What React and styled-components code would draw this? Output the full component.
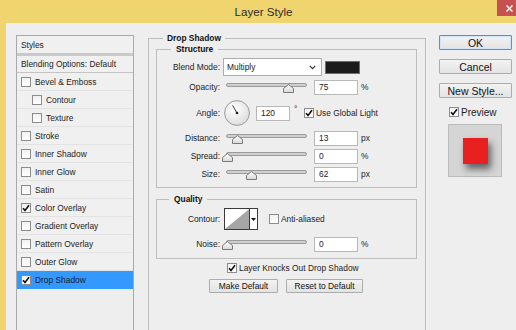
import React from "react";
import styled, { createGlobalStyle } from "styled-components";

const FONT = `"Liberation Sans", Arial, sans-serif`;
const SMALL = "8.4px";

const Global = createGlobalStyle`
  html, body { margin: 0; padding: 0; background: #eeeeee; }
  body { font-family: ${FONT}; color: #1c1c1c; }
  * { box-sizing: border-box; }
`;

const Window = styled.div`
  width: 516px;
  height: 330px;
  overflow: hidden;
  background: #f0d46e;
  display: flex;
  flex-direction: column;
`;

const TitleBar = styled.div`
  height: 23px;
  flex-shrink: 0;
  display: flex;
  align-items: flex-start;
`;

const Title = styled.div`
  flex: 1;
  padding-left: 30px;
  text-align: center;
  line-height: 24px;
  font-size: 11.6px;
  color: #2c2c2c;
`;

const CloseButton = styled.div`
  width: 19px;
  height: 16px;
  background: #c75050;
  display: flex;
  align-items: center;
  justify-content: center;
  padding-left: 5px;
`;

const Frame = styled.div`
  flex: 1;
  padding-left: 6px;
  display: flex;
  min-height: 0;
`;

const Content = styled.div`
  flex: 1;
  height: 330px;
  background: #eeeeee;
  display: flex;
  align-items: flex-start;
`;

/* ---------- Styles list ---------- */
const StylesPanel = styled.div`
  margin: 12px 0 0 10px;
  width: 118px;
  height: 330px;
  flex-shrink: 0;
  border: 1px solid #a9a9a9;
  background: #eeeeee;
  display: flex;
  flex-direction: column;
  font-size: ${SMALL};
`;

const PanelHeader = styled.div`
  height: 20px;
  padding-left: 4px;
  display: flex;
  align-items: center;
  background: #f0f0f0;
  border-bottom: 3px solid #c9c9c9;
`;

const BlendRow = styled.div`
  height: 17px;
  padding-left: 4px;
  display: flex;
  align-items: center;
  background: #f0f0f0;
  border-bottom: 1px solid #c4c4c4;
`;

const ListRow = styled.div`
  height: 18px;
  display: flex;
  align-items: center;
  gap: 4px;
  padding-left: ${(p) => (p.$indent ? 15 : 4)}px;
  background: ${(p) => (p.$selected ? "#3399ff" : "#f0f0f0")};
  border-bottom: 1px solid ${(p) => (p.$selected ? "#3399ff" : "#e3e3e3")};
`;

/* ---------- Checkbox ---------- */
const Box = styled.span`
  width: 10px;
  height: 10px;
  flex-shrink: 0;
  border: 1px solid #8c8c8c;
  background: linear-gradient(#f1f1f1, #ffffff);
  display: inline-flex;
  align-items: center;
  justify-content: center;
`;

const Check = ({ checked }) => (
  <Box>
    {checked && (
      <svg width="8" height="8" viewBox="0 0 8 8">
        <path d="M1 4.2 L3 6.4 L7 1.2" fill="none" stroke="#111" strokeWidth="1.6" />
      </svg>
    )}
  </Box>
);

/* ---------- Group boxes ---------- */
const MainGroup = styled.fieldset`
  margin: 10px 0 0 14px;
  width: 278px;
  height: 330px;
  flex-shrink: 0;
  min-width: 0;
  border: 1px solid #bdbdbd;
  padding: 1px 8px 0 7px;
  font-size: ${SMALL};
`;

const SubGroup = styled.fieldset`
  margin: ${(p) => p.$mt || 0}px 0 0 0;
  width: 261px;
  min-width: 0;
  border: 1px solid #bdbdbd;
  padding: 0 0 ${(p) => p.$pb || 0}px 0;
`;

const Legend = styled.legend`
  font-weight: bold;
  font-size: ${SMALL};
  line-height: 10px;
  padding: 0 ${(p) => p.$pad || 5}px;
  margin-left: ${(p) => p.$ml}px;
  color: #111;
`;

const Rows = styled.div`
  margin-top: 4px;
  display: flex;
  flex-direction: column;
  gap: ${(p) => p.$gap || 2}px;
`;

const Row = styled.div`
  height: ${(p) => p.$h}px;
  display: flex;
  align-items: center;
`;

const Label = styled.span`
  width: 63px;
  text-align: right;
  flex-shrink: 0;
  color: #222;
`;

const Select = styled.div`
  margin-left: 3px;
  width: 99px;
  height: 18px;
  background: #fff;
  border: 1px solid #adadad;
  display: flex;
  align-items: center;
  justify-content: space-between;
  padding: 0 5px 0 3px;
`;

const Swatch = styled.div`
  margin-left: 3px;
  width: 35px;
  height: 13px;
  background: #1b1b1b;
  border: 1px solid #6d6d6d;
`;

const SliderWrap = styled.div`
  position: relative;
  margin-left: 6px;
  width: 81px;
  height: 12px;
  flex-shrink: 0;
`;

const Track = styled.div`
  margin-top: 2px;
  height: 4px;
  border-radius: 2px;
  border: 1px solid #9b9b9b;
  background: #cfcfcf;
`;

const Thumb = styled.svg`
  position: absolute;
  top: 3px;
  margin-left: -5px;
`;

const Slider = ({ frac }) => (
  <SliderWrap>
    <Track />
    <Thumb width="11" height="9" viewBox="0 0 11 9" style={{ left: `${frac * 100}%` }}>
      <defs>
        <linearGradient id="tg" x1="0" y1="0" x2="0" y2="1">
          <stop offset="0" stopColor="#ffffff" />
          <stop offset="1" stopColor="#d8d8d8" />
        </linearGradient>
      </defs>
      <path d="M5.5 0.5 L10.5 4.5 L10.5 8.5 L0.5 8.5 L0.5 4.5 Z" fill="url(#tg)" stroke="#7a7a7a" />
    </Thumb>
  </SliderWrap>
);

const Field = styled.div`
  margin-left: ${(p) => p.$ml || 7}px;
  width: ${(p) => p.$w || 44}px;
  height: 15px;
  flex-shrink: 0;
  background: #fff;
  border: 1px solid #b8b8b8;
  padding-left: 4px;
  display: flex;
  align-items: center;
  color: #222;
`;

const Unit = styled.span`
  margin-left: 3px;
`;

const DegUnit = styled.span`
  margin-left: 4px;
  width: 10px;
  align-self: flex-start;
  margin-top: 6px;
`;

const Dial = styled.svg`
  margin-left: 4px;
  flex-shrink: 0;
`;

const CheckText = styled.span`
  margin-left: 2px;
  color: #1c1c1c;
`;

const ContourBox = styled.div`
  margin-left: 4px;
  width: 34px;
  height: 22px;
  display: flex;
  border: 1px solid #3a3a3a;
  background: #fff;
`;

const ContourArrow = styled.div`
  width: 8px;
  border-left: 1px solid #3a3a3a;
  display: flex;
  align-items: center;
  justify-content: center;
`;

const Spacer = styled.span`
  margin-left: ${(p) => p.$w}px;
  display: inline-flex;
`;

const KnockRow = styled.div`
  margin-top: 4px;
  height: 10px;
  padding-left: 71px;
  display: flex;
  align-items: center;
`;

const ButtonRow = styled.div`
  margin-top: 6px;
  padding-left: 53px;
  display: flex;
  gap: 8px;
`;

const Button = styled.div`
  width: ${(p) => p.$w}px;
  height: ${(p) => p.$h || 14}px;
  display: flex;
  align-items: center;
  justify-content: center;
  font-size: ${(p) => p.$fs || SMALL};
  color: #111;
  background: linear-gradient(#f3f3f3, #e3e3e3);
  border: 1px solid ${(p) => (p.$primary ? "#4f94d6" : "#acacac")};
  box-shadow: ${(p) => (p.$primary ? "inset 0 0 0 1px #cfe4f8" : "none")};
  border-radius: 1px;
`;

/* ---------- Right column ---------- */
const Side = styled.div`
  margin: 12px 0 0 13px;
  width: 73px;
  flex-shrink: 0;
  display: flex;
  flex-direction: column;
  gap: 9px;
`;

const PreviewRow = styled.div`
  height: 10px;
  padding-left: 10px;
  display: flex;
  align-items: center;
  font-size: 10px;
  gap: 2px;
`;

const PreviewBox = styled.div`
  margin: -2px 0 0 9px;
  width: 54px;
  height: 53px;
  background: #d5d5d5;
  border: 1px solid #bcbcbc;
  display: flex;
  align-items: center;
  justify-content: center;
`;

const RedSquare = styled.div`
  width: 25px;
  height: 26px;
  background: #e8201f;
  box-shadow: 3px 5px 7px rgba(0, 0, 0, 0.55);
`;

const styleItems = [
  { name: "Bevel & Emboss" },
  { name: "Contour", indent: true },
  { name: "Texture", indent: true },
  { name: "Stroke" },
  { name: "Inner Shadow" },
  { name: "Inner Glow" },
  { name: "Satin" },
  { name: "Color Overlay", checked: true },
  { name: "Gradient Overlay" },
  { name: "Pattern Overlay" },
  { name: "Outer Glow" },
  { name: "Drop Shadow", checked: true, selected: true },
];

const Chevron = () => (
  <svg width="7" height="5" viewBox="0 0 7 5">
    <path d="M0.8 0.8 L3.5 3.6 L6.2 0.8" fill="none" stroke="#333" strokeWidth="1.2" />
  </svg>
);

const SliderRow = ({ label, value, unit, frac }) => (
  <Row $h={16}>
    <Label>{label}</Label>
    <Slider frac={frac} />
    <Field>{value}</Field>
    <Unit>{unit}</Unit>
  </Row>
);

export default function App() {
  return (
    <>
      <Global />
      <Window>
        <TitleBar>
          <Title>Layer Style</Title>
          <CloseButton>
            <svg width="7" height="7" viewBox="0 0 7 7">
              <path d="M0.5 0.5 L6.5 6.5 M6.5 0.5 L0.5 6.5" stroke="#fff" strokeWidth="1.5" />
            </svg>
          </CloseButton>
        </TitleBar>
        <Frame>
          <Content>
            <StylesPanel>
              <PanelHeader>Styles</PanelHeader>
              <BlendRow>Blending Options: Default</BlendRow>
              {styleItems.map((it) => (
                <ListRow key={it.name} $indent={it.indent} $selected={it.selected}>
                  <Check checked={it.checked} />
                  <span>{it.name}</span>
                </ListRow>
              ))}
            </StylesPanel>

            <MainGroup>
              <Legend $ml={7} $pad={4}>Drop Shadow</Legend>
              <SubGroup $pb={5}>
                <Legend $ml={14}>Structure</Legend>
                <Rows>
                  <Row $h={18}>
                    <Label>Blend Mode:</Label>
                    <Select>
                      <span>Multiply</span>
                      <Chevron />
                    </Select>
                    <Swatch />
                  </Row>
                  <Row $h={18}>
                    <Label>Opacity:</Label>
                    <Slider frac={0.76} />
                    <Field>75</Field>
                    <Unit>%</Unit>
                  </Row>
                  <Row $h={30}>
                    <Label>Angle:</Label>
                    <Dial width="26" height="26" viewBox="0 0 26 26">
                      <defs>
                        <radialGradient id="dg" cx="0.4" cy="0.35" r="0.7">
                          <stop offset="0" stopColor="#ffffff" />
                          <stop offset="1" stopColor="#dcdcdc" />
                        </radialGradient>
                      </defs>
                      <circle cx="13" cy="13" r="12.4" fill="url(#dg)" stroke="#9a9a9a" strokeWidth="1" />
                      <line x1="13" y1="13" x2="8.6" y2="5.4" stroke="#333" strokeWidth="1" />
                      <circle cx="13" cy="13" r="1.3" fill="#222" />
                    </Dial>
                    <Field $ml={6} $w={34}>120</Field>
                    <DegUnit>°</DegUnit>
                    <Check checked />
                    <CheckText>Use Global Light</CheckText>
                  </Row>
                  <SliderRow label="Distance:" value="13" unit="px" frac={0.13} />
                  <SliderRow label="Spread:" value="0" unit="%" frac={0.01} />
                  <SliderRow label="Size:" value="62" unit="px" frac={0.31} />
                </Rows>
              </SubGroup>

              <SubGroup $mt={6} $pb={6}>
                <Legend $ml={12}>Quality</Legend>
                <Rows $gap={6}>
                  <Row $h={22}>
                    <Label>Contour:</Label>
                    <ContourBox>
                      <svg width="25" height="20" viewBox="0 0 25 20" preserveAspectRatio="none">
                        <path d="M0 20 L25 0 L25 20 Z" fill="#a5a5a5" />
                      </svg>
                      <ContourArrow>
                        <svg width="5" height="3" viewBox="0 0 5 3">
                          <path d="M0 0 L5 0 L2.5 3 Z" fill="#111" />
                        </svg>
                      </ContourArrow>
                    </ContourBox>
                    <Spacer $w={11}>
                      <Check />
                    </Spacer>
                    <CheckText>Anti-aliased</CheckText>
                  </Row>
                  <SliderRow label="Noise:" value="0" unit="%" frac={0.01} />
                </Rows>
              </SubGroup>

              <KnockRow>
                <Check checked />
                <CheckText>Layer Knocks Out Drop Shadow</CheckText>
              </KnockRow>
              <ButtonRow>
                <Button $w={69}>Make Default</Button>
                <Button $w={77}>Reset to Default</Button>
              </ButtonRow>
            </MainGroup>

            <Side>
              <Button $w={73} $h={15} $fs="10.5px" $primary>OK</Button>
              <Button $w={73} $h={15} $fs="10.5px">Cancel</Button>
              <Button $w={73} $h={15} $fs="10.5px">New Style...</Button>
              <PreviewRow>
                <Check checked />
                <span>Preview</span>
              </PreviewRow>
              <PreviewBox>
                <RedSquare />
              </PreviewBox>
            </Side>
          </Content>
        </Frame>
      </Window>
    </>
  );
}
